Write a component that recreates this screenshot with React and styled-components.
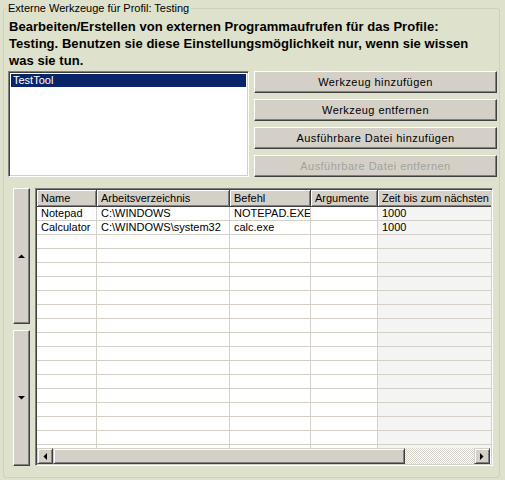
import React from 'react';
import styled, { createGlobalStyle } from 'styled-components';

const GlobalStyle = createGlobalStyle`
  html, body {
    margin: 0;
    padding: 0;
    background: #dee1cb;
  }
  body {
    font-family: "Liberation Sans", Arial, sans-serif;
    font-size: 11px;
    color: #000;
  }
`;

const Window = styled.div`
  width: 505px;
  height: 480px;
  box-sizing: border-box;
  padding: 2px 5px 0 3px;
  background: #dee1cb;
`;

const GroupBox = styled.fieldset`
  margin: 0;
  height: 476px;
  box-sizing: border-box;
  border: 1px solid #d0d0bf;
  border-radius: 3px;
  padding: 0 2px 0 4px;
  min-width: 0;
`;

const Caption = styled.legend`
  padding: 0 2px;
  margin-left: -2px;
  font-size: 11px;
  line-height: 13px;
  color: #000;
`;

const Intro = styled.p`
  margin: 3px 0 0 1px;
  font-weight: bold;
  font-size: 13px;
  line-height: 17px;
  letter-spacing: 0.05px;
  white-space: nowrap;
`;

const TopSection = styled.div`
  display: grid;
  grid-template-columns: 241px 243px;
  column-gap: 5px;
  margin-top: 2px;
  height: 106px;
`;

const ListBox = styled.div`
  box-sizing: border-box;
  background: #fff;
  border: 1px solid;
  border-color: #808080 #fff #fff #808080;
  box-shadow: inset 1px 1px #404040, inset -1px -1px #d4d0c8;
  padding: 2px 2px;
`;

const ListItem = styled.div`
  height: 13px;
  line-height: 13px;
  padding-left: 2px;
  background: ${(p) => (p.selected ? '#0a246a' : 'transparent')};
  color: ${(p) => (p.selected ? '#fff' : '#000')};
`;

const ButtonColumn = styled.div`
  display: flex;
  flex-direction: column;
  gap: 6px;
`;

const Button = styled.button`
  height: 22px;
  box-sizing: border-box;
  margin: 0;
  padding: 0;
  font-family: inherit;
  font-size: 11px;
  letter-spacing: 0.45px;
  background: #d4d0c8;
  border: 1px solid;
  border-color: #fff #404040 #404040 #fff;
  box-shadow: inset -1px -1px #808080;
  color: ${(p) => (p.disabled ? '#a3a29b' : '#000')};
`;

const BottomSection = styled.div`
  display: flex;
  gap: 5px;
  margin-top: 11px;
  height: 278px;
  padding: 0 4px 0 5px;
`;

const MoveColumn = styled.div`
  width: 17px;
  display: flex;
  flex-direction: column;
  gap: 6px;
`;

const MoveButton = styled.div`
  flex: 1;
  box-sizing: border-box;
  background: #d4d0c8;
  border: 1px solid;
  border-color: #fff #404040 #404040 #fff;
  box-shadow: inset -1px -1px #808080;
  display: flex;
  align-items: center;
  justify-content: center;
`;

const GridFrame = styled.div`
  flex: 1;
  min-width: 0;
  box-sizing: border-box;
  display: flex;
  flex-direction: column;
  background: #fff;
  border: 1px solid;
  border-color: #808080 #fff #fff #808080;
  box-shadow: inset 1px 1px #404040, inset -1px -1px #d4d0c8;
  padding: 1px;
`;

const GridBody = styled.div`
  flex: 1;
  overflow: hidden;
`;

const Row = styled.div`
  display: flex;
  white-space: nowrap;
`;

const HeaderCell = styled.div`
  flex: none;
  width: ${(p) => p.width}px;
  height: 17px;
  line-height: 16px;
  box-sizing: border-box;
  padding-left: 4px;
  background: #d4d0c8;
  border-right: 1px solid #404040;
  border-bottom: 1px solid #404040;
  box-shadow: inset 1px 1px #fff, inset -1px -1px #808080;
  overflow: hidden;
`;

const Cell = styled.div`
  flex: none;
  width: ${(p) => p.width}px;
  height: 14px;
  line-height: 13px;
  box-sizing: border-box;
  padding-left: 4px;
  border-right: 1px solid #d4d0c8;
  border-bottom: 1px solid #d4d0c8;
  background: ${(p) => (p.shaded ? '#f4f4f4' : '#fff')};
  overflow: hidden;
`;

const HScroll = styled.div`
  height: 16px;
  flex: none;
  display: flex;
  margin-right: 1px;
`;

const ScrollArrow = styled.div`
  width: 16px;
  box-sizing: border-box;
  background: #d4d0c8;
  border: 1px solid;
  border-color: #d4d0c8 #404040 #404040 #d4d0c8;
  box-shadow: inset 1px 1px #fff, inset -1px -1px #808080;
  display: flex;
  align-items: center;
  justify-content: center;
`;

const ScrollThumb = styled.div`
  width: 352px;
  box-sizing: border-box;
  background: #d4d0c8;
  border: 1px solid;
  border-color: #d4d0c8 #404040 #404040 #d4d0c8;
  box-shadow: inset 1px 1px #fff, inset -1px -1px #808080;
`;

const ScrollTrack = styled.div`
  flex: 1;
  background-image: repeating-conic-gradient(#d4d0c8 0 25%, #fff 0 50%);
  background-size: 2px 2px;
`;

const columns = [
  { key: 'name', title: 'Name', width: 60 },
  { key: 'dir', title: 'Arbeitsverzeichnis', width: 133 },
  { key: 'cmd', title: 'Befehl', width: 81 },
  { key: 'args', title: 'Argumente', width: 67 },
  { key: 'wait', title: 'Zeit bis zum nächsten Start', width: 130, shaded: true },
];

const tools = [
  { name: 'Notepad', dir: 'C:\\WINDOWS', cmd: 'NOTEPAD.EXE', args: '', wait: '1000' },
  { name: 'Calculator', dir: 'C:\\WINDOWS\\system32', cmd: 'calc.exe', args: '', wait: '1000' },
];

const rows = [...tools, ...Array.from({ length: 16 }, () => ({}))];

const Arrow = ({ dir }) => {
  const points = {
    up: '0,4 7,4 3.5,0.5',
    down: '0,0 7,0 3.5,3.5',
    left: '4,0 4,7 0.5,3.5',
    right: '0,0 0,7 3.5,3.5',
  }[dir];
  const vertical = dir === 'up' || dir === 'down';
  return (
    <svg width={vertical ? 7 : 4} height={vertical ? 4 : 7} viewBox={vertical ? '0 0 7 4' : '0 0 4 7'}>
      <polygon points={points} fill="#000" />
    </svg>
  );
};

const App = () => {
  return (
    <>
      <GlobalStyle />
      <Window>
        <GroupBox>
          <Caption>Externe Werkzeuge für Profil: Testing</Caption>
          <Intro>
            Bearbeiten/Erstellen von externen Programmaufrufen für das Profile:
            <br />
            Testing. Benutzen sie diese Einstellungsmöglichkeit nur, wenn sie wissen
            <br />
            was sie tun.
          </Intro>
          <TopSection>
            <ListBox>
              <ListItem selected>TestTool</ListItem>
            </ListBox>
            <ButtonColumn>
              <Button>Werkzeug hinzufügen</Button>
              <Button>Werkzeug entfernen</Button>
              <Button>Ausführbare Datei hinzufügen</Button>
              <Button disabled>Ausführbare Datei entfernen</Button>
            </ButtonColumn>
          </TopSection>
          <BottomSection>
            <MoveColumn>
              <MoveButton>
                <Arrow dir="up" />
              </MoveButton>
              <MoveButton>
                <Arrow dir="down" />
              </MoveButton>
            </MoveColumn>
            <GridFrame>
              <GridBody>
                <Row>
                  {columns.map((c) => (
                    <HeaderCell key={c.key} width={c.width}>
                      {c.title}
                    </HeaderCell>
                  ))}
                </Row>
                {rows.map((r, i) => (
                  <Row key={i}>
                    {columns.map((c) => (
                      <Cell key={c.key} width={c.width} shaded={c.shaded}>
                        {r[c.key]}
                      </Cell>
                    ))}
                  </Row>
                ))}
              </GridBody>
              <HScroll>
                <ScrollArrow>
                  <Arrow dir="left" />
                </ScrollArrow>
                <ScrollThumb />
                <ScrollTrack />
                <ScrollArrow>
                  <Arrow dir="right" />
                </ScrollArrow>
              </HScroll>
            </GridFrame>
          </BottomSection>
        </GroupBox>
      </Window>
    </>
  );
};

export default App;
